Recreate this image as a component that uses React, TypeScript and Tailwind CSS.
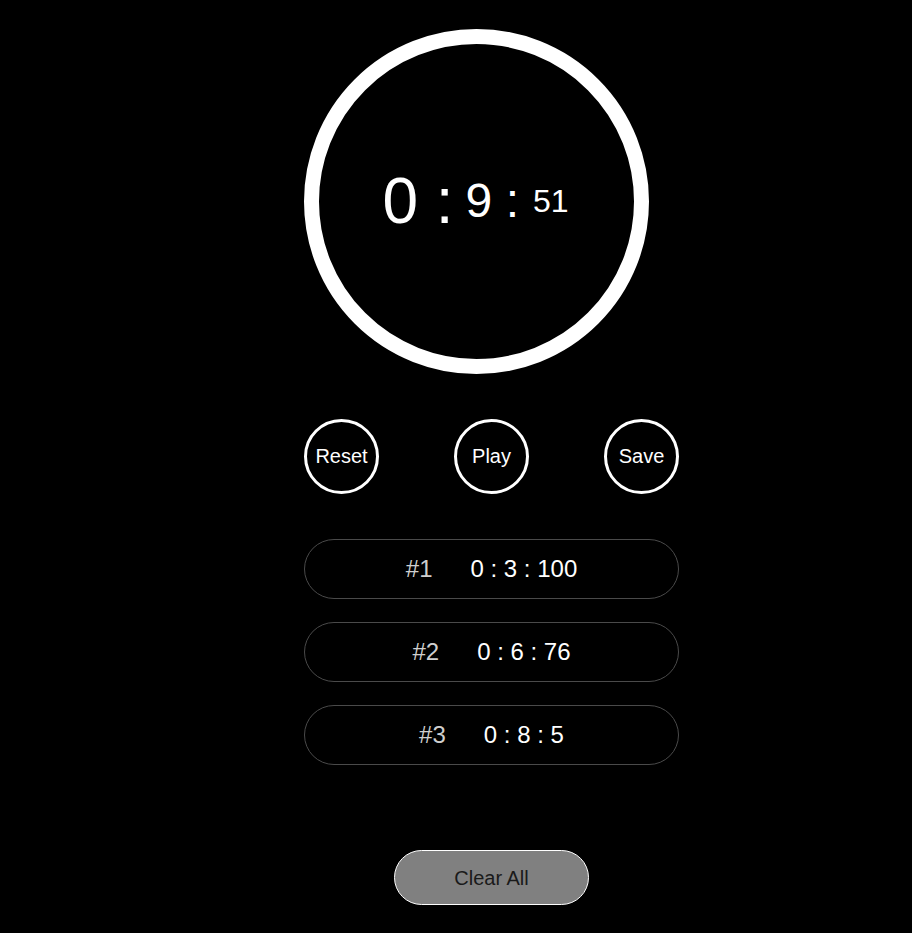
import React from 'react';

const laps = [
  { id: 1, time: '0 : 3 : 100' },
  { id: 2, time: '0 : 6 : 76' },
  { id: 3, time: '0 : 8 : 5' },
];

export default function App() {
  return (
    <div
      className="min-h-[933px] bg-black text-white pl-[304px] pt-[29px]"
      style={{ fontFamily: '"Liberation Sans", Arial, sans-serif' }}
    >
      <div className="w-[375px] flex flex-col">
        {/* Dial */}
        <div className="w-[345px] h-[345px] rounded-full border-[15px] border-white flex items-center justify-center">
          <div className="flex items-center leading-none -translate-y-[1px] -translate-x-[1px]">
            <span className="text-[64px]">0 :</span>
            <span className="text-[48px] ml-[12px]">9 :</span>
            <span className="text-[32px] ml-[14px]">51</span>
          </div>
        </div>

        {/* Controls */}
        <div className="flex justify-between mt-[45px]">
          {['Reset', 'Play', 'Save'].map((label) => (
            <button
              key={label}
              className="w-[75px] h-[75px] rounded-full border-[3px] border-white text-[20px] leading-none text-white flex items-center justify-center pb-[1px]"
            >
              {label}
            </button>
          ))}
        </div>

        {/* Laps */}
        <div className="flex flex-col gap-[23px] mt-[45px]">
          {laps.map((lap) => (
            <div
              key={lap.id}
              className="h-[60px] rounded-full border border-[#4a4a4a] flex items-center justify-center text-[24px]"
            >
              <span className="text-[#cfcfcf] mr-[38px]">#{lap.id}</span>
              <span>{lap.time}</span>
            </div>
          ))}
        </div>

        {/* Clear */}
        <div className="flex justify-center mt-[85px]">
          <button className="w-[195px] h-[55px] rounded-full bg-[#808080] border border-white text-[20px] text-[#1a1a1a]">
            Clear All
          </button>
        </div>
      </div>
    </div>
  );
}
